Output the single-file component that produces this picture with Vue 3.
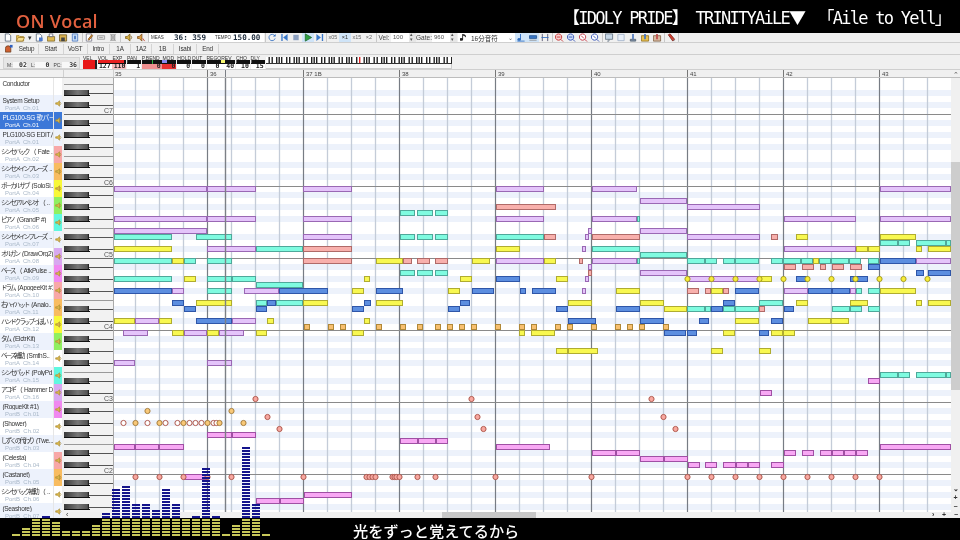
<script setup>
import { h } from 'vue'

const PATHS = {
  new: [['M2 1h4l2 2v6H2z', '#fff', '#567'], ['M7 0l1 1 1-1-1 2z', '#e8b820']],
  open: [['M1 3h3l1 1h4v5H1z', '#f0c850', '#a08030'], ['M1 9l2-4h7l-2 4z', '#f8e090', '#a08030']],
  docb: [['M2 1h4l2 2v6H2z', '#fff', '#567'], ['M5 5h4v4H5z', '#4a78d0']],
  stack: [['M1 4h8v5H1z', '#e0b850', '#806828'], ['M3 1h4v3H3z', '#fff', '#667']],
  save: [['M1 2h8v7H1z', '#d8b050', '#705820'], ['M3 5h4v4H3z', '#444']],
  blue: [['M2 1h6v8H2z', '#c8dcf4', '#4a78c0'], ['M4 3h2v4H4z', '#4a78c0']],
  pencil: [['M2 1h6v8H2z', '#fff', '#778'], ['M4 7l4-5 1 1-4 5z', '#e8a030', '#805020']],
  gray1: [['M1 3h8v4H1z', '#e0e0e0', '#999'], ['M3 5h4', 'none', '#999']],
  gray2: [['M3 2h4v6H3z', '#d0d0d0', '#888'], ['M2 1l6 8M8 1l-6 8', 'none', '#999']],
  spk1: [['M1 4h2l3-3v8l-3-3H1z', '#d8b040', '#806020'], ['M7 3q2 2 0 4', 'none', '#806020']],
  spk2: [['M1 4h2l3-3v8l-3-3H1z', '#e0a040', '#805020'], ['M7 6l2 3', 'none', '#c03020']],
  loop: [['M8 3a3.5 3.5 0 1 0 .5 3', 'none', '#2e6cc0'], ['M9 1v3H6z', '#2e6cc0']],
  first: [['M2 1h1.5v8H2zM9 1v8L4 5z', '#3a78c8']],
  stop: [['M2 2h6v6H2z', '#8ca0c0']],
  play: [['M2 1l7 4-7 4z', '#30a040', '#206830']],
  last: [['M1 1v8l5-4zM7 1h1.5v8H7z', '#3a78c8']],
  note: [['M4 1v6a2 1.5 0 1 1-1-1.2V1z', '#222'], ['M4 1q4 1 3 4-1-2-3-2z', '#222']],
  nblue: [['M5 1v6a2 1.5 0 1 1-1-1.2V1z', '#2e6cc0'], ['M1 9h8', 'none', '#2e6cc0']],
  bar: [['M1 3h8v3H1z', '#3a78c8', '#205090'], ['M1 8h8', 'none', '#888']],
  dual: [['M2 1v8M8 1v8', 'none', '#446'], ['M1 5h8', 'none', '#2e6cc0']],
  zr1: [['M4.5 1a3.5 3.5 0 1 0 .01 0z', '#f8d0d0', '#c02020'], ['M7 7l2.5 2.5M2.5 4.5h4', 'none', '#c02020']],
  zb1: [['M4.5 1a3.5 3.5 0 1 0 .01 0z', '#d0e0f8', '#2040b0'], ['M7 7l2.5 2.5M2.5 4.5h4', 'none', '#2040b0']],
  zr2: [['M4.5 1a3.5 3.5 0 1 0 .01 0z', '#fff', '#c02030'], ['M7 7l2.5 2.5M3 3l3 3', 'none', '#c02030']],
  zb2: [['M4.5 1a3.5 3.5 0 1 0 .01 0z', '#fff', '#2040b0'], ['M7 7l2.5 2.5M3 3l3 3', 'none', '#2040b0']],
  win: [['M1 1h8v6H1z', '#c8d8e8', '#607080'], ['M5 7v2H3', 'none', '#607080']],
  box: [['M1.5 1.5h7v7h-7z', '#e8eef8', '#a0b0c8']],
  pin: [['M2 7h6v2H2z', '#8090a8', '#506070'], ['M4 1h2v6H4z', '#5a80c0']],
  fold1: [['M1 3h8v6H1z', '#e8c050', '#907020'], ['M4 1h2v6H4z', '#4a78c0']],
  fold2: [['M1 3h8v6H1z', '#d8b8a0', '#806040'], ['M4 1h2v6H4z', '#c05050']],
  wrench: [['M2 2l2-1 5 6-2 2z', '#d04030', '#802018'], ['M7 7l2 2', 'none', '#808080']],
  color: [['M1 5a3 3 0 0 1 6 0v4H1z', '#d06030', '#704020'], ['M6 1h3v3H6z', '#3060c0']],
  spk: [['M1 4h2.5l3-3v8l-3-3H1z', '#dcb848', '#a88830'], ['M7.5 3q2 2 0 4', 'none', '#a88830']]
}
const Ic = (p) => h('svg', { class: 'ic', viewBox: '0 0 10 10' },
  PATHS[p.n].map(a => h('path', { d: a[0], fill: a[1], stroke: a[2] || 'none', 'stroke-width': 0.9 })))
Ic.props = ['n']

const sections = ['Setup', 'Start', 'VoST', 'Intro', '1A', '1A2', '1B', 'Isabi', 'End']
const sectionWidths = [24, 24.5, 24, 22.5, 21, 21, 22, 23, 22]

const meters = [
  { l: 'VEL', w: 14, big: true },
  { l: 'VOL', w: 14, v: '127', fill: '#e82020', fw: 100 },
  { l: 'EXP', w: 14, v: '110', fill: '#e82020', fw: 86, vb: '#f8c0c0' },
  { l: 'PAN', w: 14, v: '1', fill: '#444', fw: 10 },
  { l: 'P.BEND', w: 20, v: '0', vb: '#f09090', mark: '#30b040' },
  { l: 'MOD', w: 14, v: '0', fill: '#8888f0', fw: 30, vb: '#e83030' },
  { l: 'HOLD', w: 14, v: '0' },
  { l: 'OUT', w: 14, v: '0' },
  { l: 'REGO', w: 14, v: '0' },
  { l: 'REV', w: 14, v: '40', fill: '#f8f870', fw: 30 },
  { l: 'CHO', w: 14, v: '10', fill: '#666', fw: 10 },
  { l: 'DLY', w: 14, v: '15', fill: '#666', fw: 12 }
]

const kbKeys = []
for (let o = 0; o < 11; o++) for (const d of [2.5, 5.5, 10, 12.5, 15]) kbKeys.push(o * 17.5 + d)

const bars = [['36', 96], ['37 1B', 96], ['38', 96], ['39', 96], ['40', 96], ['41', 96], ['42', 96], ['43', 72]]

const A = 'PortA', B = 'PortB'
const tracks = [
  ['', 'Conductor', '', ''],
  ['', 'System Setup', A + '  Ch.01', ''],
  ['', 'PLG100-SG 歌パート', A + '  Ch.01', ''],
  ['', 'PLG100-SG EDITパ..', A + '  Ch.01', ''],
  ['シンセバック', '（ Fate ..', A + '  Ch.02', '#f8a8a8'],
  ['シンセメインフレーズ', ' ..', A + '  Ch.03', '#f8bc60'],
  ['ボーカルサブ', ' (SoloSi..', A + '  Ch.04', '#f8f838'],
  ['シンセアルペジオ', '（ ..', A + '  Ch.05', '#90f060'],
  ['ピアノ', ' (GrandP #)', A + '  Ch.06', '#60f8e0'],
  ['シンセメインフレーズ', ' ..', A + '  Ch.07', ''],
  ['オルガン', ' (DrawOrg2)', A + '  Ch.08', '#d8a8f0'],
  ['ベース', '（ AtkPulse ..', A + '  Ch.09', '#f088f0'],
  ['ドラム', ' (ApogeeKit #1)', A + '  Ch.10', '#f8a8a8'],
  ['右ハイハット', ' (Analo..', A + '  Ch.11', '#f8bc60'],
  ['ハンドクラップっぽい', ' (..', A + '  Ch.12', '#f8f838'],
  ['タム', ' (ElctrKit)', A + '  Ch.13', '#90f060'],
  ['ベース補助', ' (SmthS..', A + '  Ch.14', ''],
  ['シンセパッド', ' (PolyPd..', A + '  Ch.15', '#60f8e0'],
  ['アコギ', '（ Hammer D..', A + '  Ch.16', '#d8a8f0'],
  ['', '(RogueKit #1)', B + '  Ch.01', '#f088f0'],
  ['', '(Shower)', B + '  Ch.02', ''],
  ['しずくの代わり', ' (Twe...', B + '  Ch.03', ''],
  ['', '(Celesta)', B + '  Ch.04', '#f8a8a8'],
  ['', '(Castanet)', B + '  Ch.05', '#f8bc60'],
  ['シンセバック補助', '（ ..', B + '  Ch.06', ''],
  ['', '(Seashore)', B + '  Ch.07', '']
].map(([jp, name, port, color], i) => ({
  jp, name, port, color, i,
  blue: i === 1 || i === 3 || (i >= 4 && i % 2 === 1),
  sel: i === 2
}))

// Piano-roll geometry: 72px per octave, 6px per semitone, 96px per bar
const octaves = [114, 186, 258, 330, 402, 474]
const lineC = { 114: 'C7', 186: 'C6', 258: 'C5', 330: 'C4', 402: 'C3', 474: 'C2' }
const blackRows = []
for (const L of [114, 186, 258, 330, 402, 474, 546]) {
  for (const d of [-24, -12, 6, 18, 30]) {
    const y = L + d
    if (y >= 66 && y < 512) blackRows.push(y)
  }
}
const efLines = [84, 156, 228, 300, 372, 444]
const barLines = [207.5, 303.5, 399.5, 495.5, 591.5, 687.5, 783.5, 879.5]
const beatLines = []
for (let x = 135.5; x < 951; x += 24) if (!barLines.includes(x)) beatLines.push(x)

const COL = {
  P: ['#e4c4fa', '#9a68b4'], C: ['#7ffbe0', '#4fa89a'], Y: ['#f8f850', '#b0ac30'],
  S: ['#f8b0ac', '#b06a68'], B: ['#5c8ee0', '#2f56a8'], M: ['#f8a8f4', '#a050a4'],
  O: ['#f8c070', '#b08838']
}
const raw = [
  [186, 'P', [114, 207, 256], [303, 352], [496, 544], [592, 637], [880, 951]],
  [198, 'P', [640, 687]],
  [204, 'S', [496, 556]], [204, 'P', [687, 760]],
  [210, 'C', [400, 415], [417, 433], [435, 448]],
  [216, 'P', [114, 207, 256], [303, 352], [496, 544], [592, 637], [784, 856], [880, 951]], [216, 'C', [637, 640]],
  [228, 'P', [114, 207], [588, 592], [640, 687]],
  [234, 'C', [114, 172], [196, 232], [400, 415], [417, 433], [435, 448], [496, 544]],
  [234, 'P', [303, 352], [585, 589], [687, 760]],
  [234, 'S', [544, 556], [592, 640], [771, 778]],
  [234, 'Y', [796, 808], [880, 916]],
  [240, 'C', [880, 898, 910], [916, 946, 951]],
  [246, 'Y', [114, 172], [496, 520], [856, 868, 880], [916, 922], [928, 951]],
  [246, 'P', [207, 256], [582, 586], [784, 856]],
  [246, 'C', [256, 303], [592, 640]],
  [246, 'S', [303, 352]],
  [252, 'C', [640, 687]],
  [258, 'C', [114, 172], [184, 196], [207, 232], [687, 705, 717], [723, 735, 759], [771, 783, 801, 813], [819, 831, 849, 861], [868, 879]],
  [258, 'Y', [172, 184], [376, 403], [472, 490], [544, 556], [813, 819]],
  [258, 'S', [303, 352], [403, 412], [417, 430], [435, 448], [579, 583]],
  [258, 'P', [496, 544], [592, 637], [916, 951]],
  [258, 'C', [637, 640]], [258, 'B', [880, 916]],
  [264, 'S', [784, 796], [802, 814], [820, 826], [832, 844], [850, 862]],
  [264, 'B', [868, 880]], [264, 'P', [588, 592]],
  [270, 'C', [400, 415], [417, 433], [435, 448]],
  [270, 'S', [588, 592]], [270, 'P', [640, 687]], [270, 'B', [916, 924], [928, 951]],
  [276, 'P', [585, 589], [687, 760]],
  [276, 'C', [114, 172], [207, 232, 256]],
  [276, 'Y', [184, 196], [364, 370], [460, 472], [556, 568], [760, 772]],
  [276, 'B', [496, 520], [796, 808], [850, 868]],
  [282, 'C', [256, 303]],
  [288, 'B', [114, 172], [279, 328], [376, 403], [472, 494], [520, 526], [532, 556], [735, 759], [808, 832, 850]],
  [288, 'P', [172, 184], [244, 279], [582, 586], [784, 808], [850, 856]],
  [288, 'C', [207, 232], [856, 862], [868, 880]],
  [288, 'Y', [352, 364], [448, 460], [616, 640], [711, 723], [880, 916]],
  [288, 'S', [687, 699], [705, 711], [723, 729]],
  [300, 'B', [172, 184], [267, 276], [364, 371], [460, 470], [723, 735]],
  [300, 'Y', [196, 232], [303, 328], [376, 403], [568, 592], [640, 664], [796, 808], [850, 868], [916, 922], [928, 951]],
  [300, 'C', [256, 267], [276, 303], [759, 783]],
  [306, 'B', [184, 196], [256, 267], [352, 364], [448, 460], [556, 568], [616, 640], [711, 723], [784, 794]],
  [306, 'Y', [664, 687]],
  [306, 'C', [687, 705, 711], [723, 735, 759], [832, 850, 862], [868, 880]],
  [306, 'S', [759, 765]],
  [318, 'Y', [114, 135], [159, 172], [267, 274], [364, 370], [735, 759], [808, 831, 849]],
  [318, 'P', [135, 159], [232, 256]],
  [318, 'B', [196, 232], [568, 596], [640, 664], [699, 709], [771, 783]],
  [330, 'P', [123, 148], [184, 207], [219, 244]],
  [330, 'Y', [172, 184], [207, 219], [256, 267], [352, 364], [519, 525], [531, 555], [723, 735], [771, 783, 795]],
  [330, 'B', [664, 686], [687, 697], [759, 769]],
  [348, 'Y', [556, 568, 598], [711, 723], [759, 771]],
  [360, 'P', [114, 135], [207, 232]],
  [372, 'C', [880, 898, 910], [916, 946, 951]],
  [378, 'M', [868, 880]],
  [390, 'M', [760, 772]],
  [432, 'M', [207, 232, 256]],
  [438, 'M', [400, 418, 436, 448]],
  [444, 'M', [114, 135, 159, 184], [496, 550], [880, 951]],
  [450, 'M', [592, 616, 640], [784, 796], [802, 814], [820, 832, 844, 856, 868]],
  [456, 'M', [640, 664, 688]],
  [462, 'M', [688, 700], [705, 717], [723, 736, 748, 760], [771, 784]],
  [474, 'M', [184, 208]],
  [492, 'M', [304, 352]],
  [498, 'M', [256, 280, 304]]
]
const notes = []
for (const [y, c, ...chains] of raw) {
  for (const ch of chains) {
    for (let i = 0; i + 1 < ch.length; i++) {
      notes.push({ k: `${y}${c}${ch[i]}`, x: ch[i] + 0.5, y: y + 0.5, w: ch[i + 1] - ch[i] - 1, f: COL[c][0], s: COL[c][1] })
    }
  }
}
const squares = [304, 328, 340, 376, 400, 417, 435, 447, 459, 471, 495, 519, 531, 555, 567, 591, 615, 627, 639, 663]

const DOT = {
  S: ['#f8a8a0', '#b05a50'], O: ['#f8c878', '#a88040'], W: ['#fff', '#b05a50'], Y: ['#f8ec38', '#a8a020']
}
const dotList = [
  ['Y', 279, [687, 711, 735, 759, 783, 807, 831, 855, 879, 903, 927]],
  ['S', 399, [255, 471, 651]],
  ['S', 417, [267, 477, 663]],
  ['S', 429, [279, 483, 675]],
  ['O', 411, [147, 231]],
  ['W', 423, [123, 147, 165, 177, 189, 195, 201, 213, 216]],
  ['O', 423, [135, 159, 183, 207, 219, 243]],
  ['S', 477, [135, 159, 183, 207, 231, 303, 366, 369, 372, 375, 392, 394, 396, 399, 417, 435, 495, 591, 687, 711, 735, 759, 783, 807, 831, 855, 879]]
]
const dots = []
for (const [t, y, xs] of dotList) for (const x of xs) dots.push({ k: `${t}${y}${x}`, x: x + 0.5, y, f: DOT[t][0], s: DOT[t][1] })

const hist = [1, 3, 6, 7, 5, 2, 2, 2, 4, 8, 16, 17, 11, 11, 9, 16, 11, 6, 7, 23, 7, 1, 4, 30, 11, 1]
</script>

<template>
  <div class="screen">
    <header class="title-bar">
      <div class="on-vocal">ON Vocal</div>
      <div class="song"><span class="fw">【</span>IDOLY PRIDE<span class="fw">】</span> TRINITYAiLE<span class="fw tri">▼</span> <span class="fw">「</span>Aile to Yell<span class="fw">」</span></div>
    </header>

    <div class="tb tb1">
      <Ic n="new" /><Ic n="open" /><span class="caret">▾</span><Ic n="docb" /><Ic n="stack" /><Ic n="save" /><Ic n="blue" />
      <i class="sep"></i>
      <Ic n="pencil" /><Ic n="gray1" /><Ic n="gray2" />
      <i class="sep gap2"></i>
      <Ic n="spk1" /><Ic n="spk2" />
      <i class="sep"></i>
      <div class="time">
        <span class="tiny meas">MEAS</span><b class="pos">36: 359</b>
        <span class="tiny tempo">TEMPO</span><b class="bpm">150.00</b>
      </div>
      <i class="sep"></i>
      <Ic n="loop" /><Ic n="first" /><Ic n="stop" /><span class="hl"><Ic n="play" /></span><Ic n="last" />
      <i class="sep nm"></i>
      <span class="sp">x05</span><span class="sp on">×1</span><span class="sp">x15</span><span class="sp">×2</span>
      <i class="sep"></i>
      <span class="lbl vel">Vel:</span><span class="input">100</span><span class="spin"></span>
      <span class="lbl gate">Gate:</span><span class="input">960</span><span class="spin"></span>
      <div class="combo"><Ic n="note" /><span>16分音符</span><em>⌄</em></div>
      <span class="hl2"><Ic n="nblue" /></span><span class="hl2"><Ic n="bar" /></span><Ic n="dual" />
      <i class="sep"></i>
      <Ic n="zr1" /><Ic n="zb1" /><Ic n="zr2" /><Ic n="zb2" />
      <i class="sep"></i>
      <Ic n="win" /><Ic n="box" /><Ic n="pin" /><Ic n="fold1" /><Ic n="fold2" />
      <i class="sep"></i>
      <Ic n="wrench" />
      <i class="sep"></i>
    </div>

    <div class="tb tb2">
      <span class="colorbtn"><Ic n="color" /></span>
      <span v-for="(s, i) in sections" :key="s" class="section" :style="{ width: sectionWidths[i] + 'px' }">{{ s }}</span>
    </div>

    <div class="tb tb3">
      <div class="mlp">
        <span>M:</span><b class="v1">02</b><span>L:</span><b class="v2">0</b><span>PC:</span><b class="v3">36</b>
      </div>
      <div v-for="m in meters" :key="m.l" class="meter" :style="{ width: m.w + 'px' }">
        <div class="mlabel">{{ m.l }}</div>
        <div v-if="m.big" class="mbig"><i></i></div>
        <template v-else>
          <div class="mbar">
            <i v-if="m.fill" class="mfill" :style="{ width: m.fw + '%', background: m.fill }"></i>
            <i v-if="m.mark" class="mmark" :style="{ background: m.mark }"></i>
          </div>
          <div class="mval" :style="{ background: m.vb || '#fff' }">{{ m.v }}</div>
        </template>
      </div>
      <div class="kb">
        <svg class="kbsvg" viewBox="0 0 186 7" width="186" height="7">
          <rect width="186" height="7" fill="#fff" />
          <rect v-for="(x, i) in kbKeys" :key="i" :x="x" y="0" width="1.4" height="6" :fill="i === 26 ? '#e02020' : '#222'" />
          <path d="M0 6.5h186" stroke="#333" stroke-width="1" />
        </svg>
        <div class="kbfoot"></div>
      </div>
    </div>

    <div class="ruler">
      <div class="rhead rh1"></div>
      <div class="rhead rh2"></div>
      <div class="rbars">
        <span class="rfirst">35</span>
        <span v-for="b in bars" :key="b[0]" class="rbar" :style="{ width: b[1] + 'px' }">{{ b[0] }}</span>
        <i class="rplay"></i>
      </div>
      <div class="rup">⌃</div>
    </div>

    <main class="main">
      <aside class="tracks">
        <div v-for="t in tracks" :key="t.i" class="track" :class="{ blue: t.blue, sel: t.sel }">
          <div class="tname">
            <div class="t1"><span class="jp">{{ t.jp }}</span>{{ t.name }}</div>
            <div class="t2">{{ t.port }}</div>
          </div>
          <div class="tmute" :style="t.color ? { background: t.color } : {}">
            <Ic v-if="t.i > 0" n="spk" />
          </div>
        </div>
      </aside>

      <div class="editor">
        <div class="panes">
          <svg class="piano" viewBox="64 78 50 434" width="50" height="434">
            <defs>
              <linearGradient id="bk" x1="0" x2="1" y1="0" y2="0">
                <stop offset="0" stop-color="#3a3a3a" />
                <stop offset="0.55" stop-color="#777" />
                <stop offset="0.93" stop-color="#555" />
                <stop offset="1" stop-color="#111" />
              </linearGradient>
            </defs>
            <rect x="64" y="78" width="50" height="434" fill="#f2f2f2" />
            <path v-for="y in efLines" :key="y" :d="`M64 ${y + 0.5}H114`" stroke="#9a9a9a" />
            <path v-for="y in octaves" :key="y" :d="`M64 ${y + 0.5}H114`" stroke="#6a6a6a" stroke-width="1.2" />
            <g v-for="y in blackRows" :key="y">
              <path :d="`M89 ${y + 3.5}H114`" stroke="#555" />
              <rect x="64" :y="y" width="25" height="6" fill="url(#bk)" />
              <path :d="`M64 ${y + 5.5}H90`" stroke="#111" />
            </g>
            <text v-for="y in octaves" :key="'c' + y" x="113" :y="y - 1" class="clabel">{{ lineC[y] }}</text>
            <path d="M113.5 78V512" stroke="#aaa" />
          </svg>

          <svg class="roll" viewBox="114 78 837 434" width="837" height="434">
            <rect x="114" y="78" width="837" height="434" fill="#fff" />
            <rect v-for="y in blackRows" :key="y" x="114" :y="y" width="837" height="6" fill="#edf2fb" />
            <path v-for="x in beatLines" :key="x" :d="`M${x} 78V512`" stroke="#c4ccd8" stroke-width="1.3" />
            <path v-for="x in barLines" :key="x" :d="`M${x} 78V512`" stroke="#777c84" stroke-width="1.2" />
            <path v-for="y in octaves" :key="y" :d="`M114 ${y + 0.5}H951`" stroke="#8a8a8a" stroke-width="1.2" />
            <rect v-for="n in notes" :key="n.k" :x="n.x" :y="n.y" :width="n.w" height="5" :fill="n.f" :stroke="n.s" />
            <rect v-for="x in squares" :key="x" :x="x + 0.5" y="324.5" width="5" height="5" :fill="COL.O[0]" :stroke="COL.O[1]" />
            <circle v-for="d in dots" :key="d.k" :cx="d.x" :cy="d.y" r="2.6" :fill="d.f" :stroke="d.s" />
            <path d="M225.5 78V512" stroke="#7c8086" stroke-width="1.4" />
          </svg>

          <div class="vscroll">
            <div class="vthumb"></div>
            <div class="vbtns"><span>⌄</span><span>+</span><span>−</span></div>
          </div>
        </div>
        <div class="hscroll">
          <span class="hl-arrow">‹</span>
          <div class="hthumb"></div>
          <div class="hbtns"><span>›</span><span>+</span><span>−</span></div>
        </div>
      </div>
    </main>

    <footer class="lyric">光をずっと覚えてるから</footer>

    <div class="hist">
      <div v-for="(c, i) in hist" :key="i" class="hcol">
        <i v-for="s in c" :key="s" class="seg" :class="{ low: s <= 6 }"></i>
      </div>
    </div>
  </div>
</template>

<style>
html, body { margin: 0; padding: 0; background: #000; }
</style>

<style scoped>
.screen {
  position: relative;
  width: 960px;
  height: 540px;
  overflow: hidden;
  display: flex;
  flex-direction: column;
  background: #000;
  font-family: "Liberation Sans", "Noto Sans CJK JP", sans-serif;
  color: #222;
  filter: blur(0.3px);
}
.title-bar {
  height: 33px;
  flex: none;
  background: #000;
  display: flex;
  justify-content: space-between;
  align-items: center;
  padding: 0 10px 0 16px;
}
.on-vocal {
  font-family: "Open Sans", sans-serif;
  font-size: 18px;
  font-weight: 600;
  letter-spacing: 0.3px;
  color: #e2603f;
  padding-top: 8px;
}
.song {
  font-family: "DejaVu Sans Mono", monospace;
  font-size: 17px;
  letter-spacing: -1.73px;
  color: #fff;
  white-space: pre;
}
.fw { font-family: "Noto Sans CJK JP", sans-serif; }
.tri { margin-right: 4.5px; }

.tb {
  flex: none;
  display: flex;
  align-items: center;
  background: #f0f0f0;
  box-sizing: border-box;
}
.tb1 { height: 10px; padding-left: 2px; border-bottom: 1px solid #cfcfcf; }
.ic { width: 9px; height: 9px; padding: 0 1.5px; flex: none; display: block; }
.caret { width: 7px; font-size: 7px; line-height: 9px; text-align: center; color: #333; flex: none; }
.sep { width: 1px; height: 9px; background: #c8c8c8; margin: 0 0.5px; flex: none; }
.sep.nm { margin: 0; }
.gap2 { margin-right: 2.5px; }
.time {
  width: 115px;
  height: 9px;
  flex: none;
  background: #fff;
  display: flex;
  align-items: center;
  font-family: "DejaVu Sans Mono", monospace;
  color: #1c2a3a;
}
.tiny { font-size: 4.5px; font-family: "Liberation Sans", sans-serif; color: #333; }
.meas { margin-left: 2px; width: 23px; }
.pos { font-size: 7.6px; width: 41px; white-space: pre; }
.tempo { width: 18px; }
.bpm { font-size: 7.6px; }
.hl { background: #cfe4f8; display: block; flex: none; }
.hl2 { background: #cfe4f8; display: block; flex: none; }
.sp { width: 12px; font-size: 5.5px; line-height: 9px; text-align: center; color: #666; flex: none; }
.sp.on { background: #cfe4f8; color: #333; }
.lbl { font-size: 6.5px; color: #444; flex: none; }
.vel { width: 14px; text-align: center; }
.gate { width: 16px; text-align: center; }
.input { width: 16px; height: 9px; line-height: 9px; padding-left: 2px; font-size: 6px; background: #fff; color: #555; flex: none; }
.spin { width: 7px; height: 9px; background: #e6e6e6; flex: none; position: relative; }
.spin::before { content: "▴"; position: absolute; left: 1px; top: -2px; font-size: 5px; color: #555; }
.spin::after { content: "▾"; position: absolute; left: 1px; top: 3px; font-size: 5px; color: #555; }
.combo {
  width: 57px;
  height: 9px;
  margin-left: 1px;
  flex: none;
  background: #fff;
  display: flex;
  align-items: center;
  font-size: 6.5px;
  color: #333;
  font-family: "Noto Sans CJK JP", sans-serif;
}
.combo span { flex: 1; padding-left: 1px; }
.combo em { font-style: normal; font-size: 6px; color: #666; padding-right: 2px; line-height: 6px; }

.tb2 { height: 12px; border-bottom: 1px solid #cfcfcf; padding-left: 3px; }
.colorbtn { width: 12px; flex: none; }
.section {
  font-size: 6.3px;
  letter-spacing: -0.2px;
  text-align: center;
  line-height: 10px;
  color: #333;
  border-right: 1px solid #d4d4d4;
  box-sizing: border-box;
  flex: none;
}

.tb3 { height: 15px; padding-left: 3px; border-bottom: 1px solid #cfcfcf; align-items: flex-start; padding-top: 2px; }
.mlp {
  width: 77px;
  height: 12px;
  box-sizing: border-box;
  margin-right: 3px;
  flex: none;
  background: #e6e6e6;
  border: 1px solid #d4d4d4;
  display: flex;
  align-items: flex-end;
  font-size: 5px;
  line-height: 6px;
  padding: 0 2px 0 3px;
  color: #444;
}
.mlp b { font-size: 6.5px; font-family: "DejaVu Sans Mono", monospace; text-align: right; background: #f8f8f8; color: #333; }
.v1 { width: 16px; margin-right: 4px; }
.v2 { width: 16px; margin-right: 4px; }
.v3 { width: 17px; }
.meter { flex: none; margin-right: 0.7px; display: flex; flex-direction: column; }
.mlabel { font-size: 5px; line-height: 3px; height: 3px; color: #333; white-space: nowrap; }
.mbar { height: 4px; background: #111; position: relative; display: flex; }
.mfill { display: block; height: 3px; }
.mmark { position: absolute; left: 50%; width: 1px; height: 4px; top: 0; }
.mval {
  height: 5px;
  line-height: 5.5px;
  font-size: 6.5px;
  font-weight: 700;
  text-align: right;
  padding-right: 1px;
  color: #222;
  font-family: "DejaVu Sans Mono", monospace;
}
.mbig { height: 9px; background: #e81818; position: relative; }
.mbig i { position: absolute; right: 0; top: 0; bottom: 0; width: 2px; background: #222; display: block; }
.kb { width: 186px; margin-left: 1px; flex: none; }
.kbsvg { display: block; }
.kbfoot { height: 5px; background: #f8f8f8; border-right: 1px solid #ccc; border-bottom: 1px solid #ccc; box-sizing: border-box; }

.ruler {
  height: 8px;
  flex: none;
  display: flex;
  background: #f0f0f0;
  box-sizing: border-box;
  border-bottom: 1px solid #bdbdbd;
}
.rhead { height: 7px; box-sizing: border-box; border-right: 1px solid #d0d0d0; }
.rh1 { width: 64px; }
.rh2 { width: 50px; }
.rbars {
  position: relative;
  width: 837px;
  display: flex;
  overflow: hidden;
  font-size: 6px;
  line-height: 8px;
  color: #444;
}
.rfirst { width: 93px; padding-left: 1px; box-sizing: border-box; flex: none; }
.rbar { padding-left: 2px; box-sizing: border-box; border-left: 1px solid #777; flex: none; white-space: nowrap; }
.rplay { position: absolute; left: 111px; top: 0; bottom: 0; width: 1px; background: #7c8086; }
.rup { width: 9px; text-align: center; font-size: 7px; line-height: 9px; color: #555; }

.main { height: 440px; flex: none; display: flex; background: #f0f0f0; }
.tracks { width: 62px; margin-right: 2px; height: 440px; overflow: hidden; flex: none; background: #fff; }
.track { height: 17px; display: flex; background: #fff; box-sizing: border-box; }
.track.blue { background: #edf2fc; }
.track.sel { background: #3c78d8; }
.tname { width: 53px; overflow: hidden; flex: none; padding-left: 1px; box-sizing: border-box; }
.t1 {
  font-size: 6.5px;
  line-height: 8px;
  height: 8px;
  margin-top: 0.5px;
  white-space: pre;
  letter-spacing: -0.3px;
  color: #333;
  overflow: hidden;
}
.jp { letter-spacing: -1.9px; margin-right: 1.4px; font-family: "Noto Sans CJK JP", sans-serif; }
.t2 {
  font-size: 6px;
  line-height: 8px;
  padding-left: 4px;
  white-space: pre;
  color: #a9b8c8;
}
.sel .t1, .sel .t2 { color: #fff; }
.tmute { width: 9px; flex: none; display: flex; align-items: center; justify-content: center; box-sizing: border-box; border-left: 1px solid #e6e6e6; }
.tmute .ic { width: 7px; height: 7px; padding: 0; }

.editor { width: 896px; flex: none; display: flex; flex-direction: column; }
.panes { height: 434px; display: flex; flex: none; }
.piano, .roll { display: block; flex: none; }
.clabel { font-size: 7px; fill: #555; text-anchor: end; font-family: "Liberation Sans", sans-serif; }
.vscroll { width: 9px; flex: none; display: flex; flex-direction: column; background: #f0f0f0; padding-top: 84px; box-sizing: border-box; }
.vthumb { height: 228px; background: #cdcdcd; }
.vbtns { margin-top: auto; display: flex; flex-direction: column; font-size: 7px; line-height: 9px; text-align: center; color: #333; padding-bottom: 1px; font-weight: 700; }
.hscroll { height: 6px; display: flex; align-items: center; font-size: 7px; line-height: 6px; color: #333; background: #f0f0f0; }
.hl-arrow { width: 6px; margin-left: 2px; }
.hthumb { width: 94px; height: 6px; margin-left: 370px; background: #c8c8c8; }
.hbtns { margin-left: auto; display: flex; width: 26px; justify-content: space-between; font-weight: 700; padding-right: 2px; }

.lyric {
  flex: 1;
  background: #000;
  color: #fff;
  font-family: "Noto Sans CJK JP", sans-serif;
  font-size: 15.2px;
  font-weight: 500;
  line-height: 24px;
  padding-left: 353px;
  white-space: nowrap;
}

.hist {
  position: absolute;
  left: 12px;
  bottom: 4px;
  display: flex;
  align-items: flex-end;
  gap: 2px;
  pointer-events: none;
}
.hcol { width: 8px; display: flex; flex-direction: column-reverse; gap: 1px; }
.seg { display: block; height: 2px; background: #14148c; }
.seg.low { background: #c8c85a; }
</style>
